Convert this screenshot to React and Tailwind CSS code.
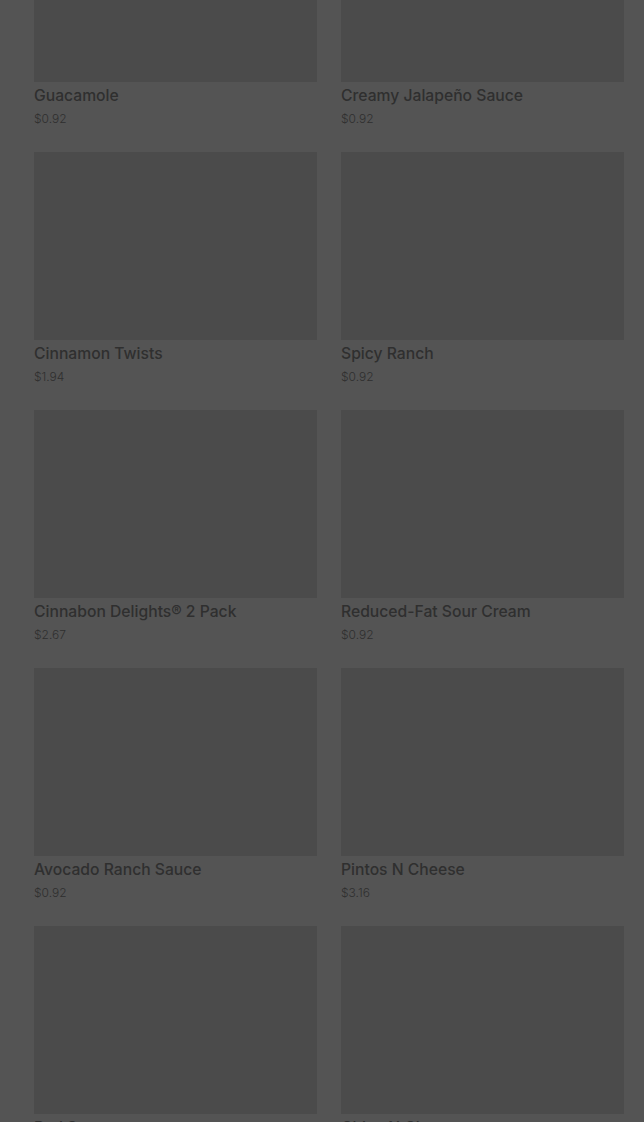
import React from 'react';

const items = [
    { name: 'Guacamole', price: '$0.92' },
    { name: 'Creamy Jalapeño Sauce', price: '$0.92' },
    { name: 'Cinnamon Twists', price: '$1.94' },
    { name: 'Spicy Ranch', price: '$0.92' },
    { name: 'Cinnabon Delights® 2 Pack', price: '$2.67' },
    { name: 'Reduced-Fat Sour Cream', price: '$0.92' },
    { name: 'Avocado Ranch Sauce', price: '$0.92' },
    { name: 'Pintos N Cheese', price: '$3.16' },
    { name: 'Red Sauce', price: '$0.92' },
    { name: 'Chips N Cheese', price: '$1.94' },
];

const App = () => {
    return (
        <div className="w-[644px] h-[1122px] overflow-hidden bg-[#545454] font-['Inter','Liberation_Sans',sans-serif]">
            <div className="grid grid-cols-2 gap-x-6 pl-[34px] pr-5 -mt-[106px]">
                {items.map((item, index) => (
                    <div key={index} className="h-[258px] flex flex-col">
                        <div className="h-[188px] bg-[#4b4b4b]"></div>
                        <h3 className="mt-[3px] text-[15.7px] leading-[22px] font-medium text-[#2f2f2f]">{item.name}</h3>
                        <p className="mt-[4px] text-[12px] leading-[16px] font-light text-[#2f2f2f]">{item.price}</p>
                    </div>
                ))}
            </div>
        </div>
    );
};

export default App;
